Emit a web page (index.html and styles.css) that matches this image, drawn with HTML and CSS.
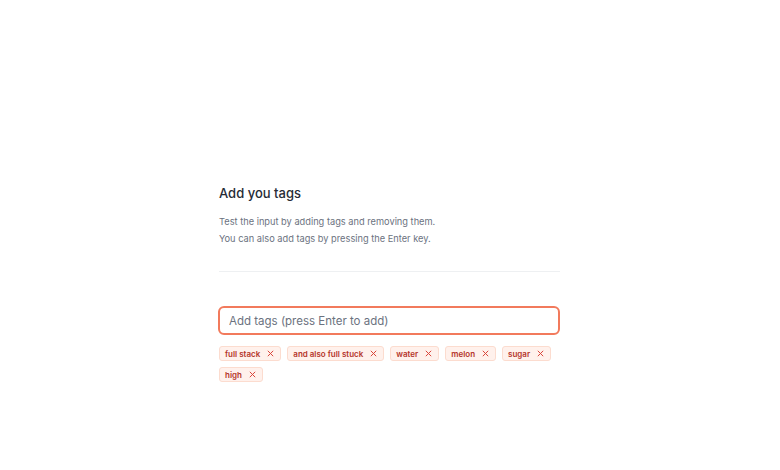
FILE: index.html
```html
<!DOCTYPE html>
<html>
<head>
<meta charset="utf-8">
<link rel="stylesheet" href="styles.css">
</head>
<body>
<div class="page">
  <div class="panel">
    <h2 class="title">Add you tags</h2>
    <p class="desc">Test the input by adding tags and removing them.<br>You can also add tags by pressing the Enter key.</p>
    <hr class="divider">
    <input class="tag-input" type="text" placeholder="Add tags (press Enter to add)">
    <div class="tags">
      <span class="tag">full stack<svg class="x" viewBox="0 0 10 10"><path d="M2 2L8 8M8 2L2 8"/></svg></span>
      <span class="tag">and also full stuck<svg class="x" viewBox="0 0 10 10"><path d="M2 2L8 8M8 2L2 8"/></svg></span>
      <span class="tag">water<svg class="x" viewBox="0 0 10 10"><path d="M2 2L8 8M8 2L2 8"/></svg></span>
      <span class="tag">melon<svg class="x" viewBox="0 0 10 10"><path d="M2 2L8 8M8 2L2 8"/></svg></span>
      <span class="tag">sugar<svg class="x" viewBox="0 0 10 10"><path d="M2 2L8 8M8 2L2 8"/></svg></span>
      <span class="tag">high<svg class="x" viewBox="0 0 10 10"><path d="M2 2L8 8M8 2L2 8"/></svg></span>
    </div>
  </div>
</div>
</body>
</html>
```
FILE: styles.css
```css
html, body {
  margin: 0;
  padding: 0;
  background: #ffffff;
  font-family: Inter, "Liberation Sans", sans-serif;
}
.page {
  width: 780px;
  height: 470px;
  display: flex;
  justify-content: flex-start;
}
.panel {
  width: 341px;
  padding-top: 184px;
  margin-left: 219px;
}
.title {
  margin: 0;
  font-size: 13px;
  font-weight: 500;
  color: #262b36;
  line-height: 18px;
}
.desc {
  margin: 11px 0 0 0;
  font-size: 9.25px;
  line-height: 17px;
  color: #6b7280;
}
.divider {
  margin: 24px 0 0 0;
  border: 0;
  border-top: 1px solid #eef0f2;
  height: 0;
}
.tag-input {
  display: block;
  box-sizing: border-box;
  width: 342px;
  height: 29px;
  margin: 34px 0 0 -1px;
  padding: 0 9px;
  border: 2px solid #f27a5c;
  border-radius: 6px;
  font-family: Inter, "Liberation Sans", sans-serif;
  font-size: 11.5px;
  color: #374151;
  outline: none;
  background: #fff;
}
.tag-input::placeholder {
  color: #6b7280;
}
.tags {
  display: flex;
  flex-wrap: wrap;
  gap: 6px;
  margin: 11px 0 0 0;
}
.tag {
  display: inline-flex;
  align-items: center;
  gap: 6px;
  height: 15px;
  box-sizing: border-box;
  padding: 0 5px 0 5px;
  background: #fff1ec;
  border: 1px solid #fcdccf;
  border-radius: 3px;
  font-size: 8px;
  font-weight: 600;
  color: #b4342a;
}
.x {
  width: 9px;
  height: 9px;
  stroke: #d9453a;
  stroke-width: 1.1;
  fill: none;
}
```
